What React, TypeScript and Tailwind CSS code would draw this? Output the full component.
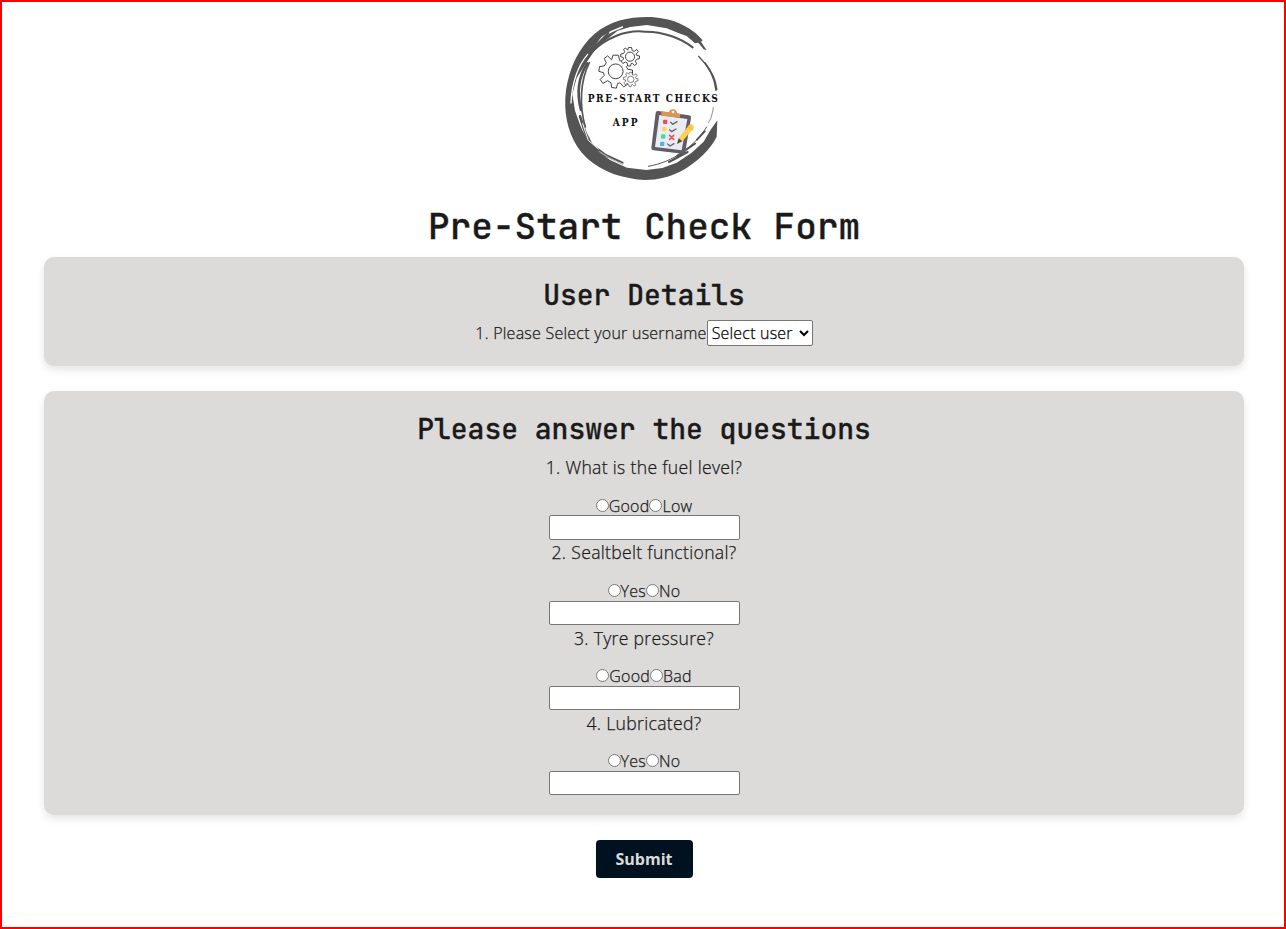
import React from "react";

const GEAR = "M-4 -24 L4 -24 L6 -16 L11 -14 L18 -19 L22 -13 L16 -7 L18 -3 L25 -2 L25 5 L17 7 L14 12 L18 19 L12 23 L6 17 L3 18 L1 25 L-6 24 L-7 17 L-12 14 L-19 18 L-23 12 L-17 6 L-18 2 L-25 0 L-24 -7 L-17 -8 L-14 -13 L-17 -19 L-12 -23 L-6 -17 Z";

function Gear({ x, y, s, w, r = 10 }: { x: number; y: number; s: number; w: number; r?: number }) {
  return (
    <g transform={`translate(${x} ${y}) scale(${s})`} fill="none" stroke="#444" strokeWidth={w / s} strokeLinejoin="round">
      <path d={GEAR} fill="#fff" />
      <circle r={r} />
    </g>
  );
}

function Logo() {
  return (
    <svg className="mr-1 block h-[180px] w-[175px]" viewBox="0 0 525 540" role="img" aria-label="Pre-start checks app">
      <path
        fill="#545454"
        d="M455 127 L446 124 L430 104 L420 106 L395 84 L370 75 L335 61 L276 51 L225 57 L188 68 L160 91 L128 114 L94 164 L65 210 L52 258 L60 308 L75 350 L83 368 L100 398 L125 426 L165 456 L216 479 L274 486 L322 480 L365 464 L410 434 L446 401 L465 368 L487 337 L485 386 C469 420 427 464 375 491 C330 513 277 522 227 511 C158 499 100 466 67 416 C37 369 25 310 33 247 C42 181 72 117 119 77 C166 39 218 27 278 27 C344 27 409 54 443 97 L438 101 Z"
      />
      <g fill="none" stroke="#545454" strokeLinecap="round">
        <path d="M103 128 C128 93 164 70 202 57" stroke="#fff" strokeWidth="5" />
        <path d="M48 285 C50 227 69 172 98 139" stroke="#fff" strokeWidth="4" />
        <path d="M111 132 C150 91 211 65 269 71 C324 70 378 91 413 118" strokeWidth="6" />
        <path d="M102 130 L134 88 M107 130 L160 75 M104 124 L119 120" strokeWidth="7" />
        <path d="M91 357 C72 291 76 218 103 164" strokeWidth="5" />
        <path d="M78 306 C63 249 75 200 97 166" strokeWidth="8" />
        <path d="M75 325 L91 374 L109 410 L152 442 L202 465" strokeWidth="8" />
        <path d="M83 347 L100 397 L130 423" stroke="#fff" strokeWidth="3" />
        <path d="M134 431 C167 455 194 464 221 474" stroke="#fff" strokeWidth="2" />
        <path d="M431 145 C463 177 479 208 483 247" strokeWidth="4" />
        <path d="M450 165 C469 189 482 215 485 244" strokeWidth="5" />
        <path d="M475 299 C471 323 467 335 460 344" strokeWidth="2" />
        <path d="M455 357 C418 415 356 462 280 475" strokeWidth="3" />
        <path d="M449 370 L426 395 M420 407 L366 444 M398 432 L342 462" strokeWidth="6" />
      </g>
      <Gear x={182} y={190} s={2.02} w={3} r={11} />
      <Gear x={225} y={146} s={1.14} w={3} r={12} />
      <Gear x={227} y={214} s={0.88} w={2} r={11} />
      <g fill="#111" fontFamily="'DejaVu Serif', serif" fontWeight="700">
        <text transform="translate(98 282) scale(0.88 1)" fontSize="31" textLength="444" lengthAdjust="spacing">PRE-START CHECKS</text>
        <text transform="translate(173 353) scale(0.88 1)" fontSize="31" textLength="85" lengthAdjust="spacing">APP</text>
      </g>
      <path d="M309 309 L402 322 Q409 323 408 330 L391 431 Q390 438 383 437 L295 427 Q288 426 289 419 L302 315 Q303 308 309 309" fill="#625b68" />
      <path d="M313 321 L397 333 L380 427 L300 417 Z" fill="#e9edf2" />
      <path d="M319 310 L342 313 Q344 303 354 304 Q366 305 366 316 L376 318 L375 329 L319 323 Z" fill="#da9653" />
      <circle cx="354" cy="312" r="4" fill="#fff" />
      <rect x="324" y="335" width="13" height="13" rx="3" fill="#ee475e" />
      <rect x="321" y="357" width="13" height="13" rx="3" fill="#ffd35e" />
      <rect x="318" y="379" width="13" height="13" rx="3" fill="#3fe09b" />
      <rect x="315" y="401" width="13" height="13" rx="3" fill="#62a7f4" />
      <g fill="none" stroke="#65616e" strokeWidth="4" strokeLinecap="round" strokeLinejoin="round">
        <path d="M347 343 L353 349 L366 341 M344 365 L350 371 L363 363 M338 408 L345 414 L357 407" />
        <path d="M344 382 L356 394 M356 382 L344 394" stroke="#ed4d62" strokeWidth="5" />
      </g>
      <path d="M403 350 Q406 345 411 349 L416 354 Q419 358 414 363 L382 400 L367 407 L371 390 Z" fill="#ffd14f" />
      <path d="M402 351 L416 363 L410 369 L397 358 Z" fill="#ffbf46" />
      <path d="M371 391 L382 400 L366 408 Z" fill="#51484f" />
    </svg>
  );
}

const questions = [
  { text: "1. What is the fuel level?", options: ["Good", "Low"] },
  { text: "2. Sealtbelt functional?", options: ["Yes", "No"] },
  { text: "3. Tyre pressure?", options: ["Good", "Bad"] },
  { text: "4. Lubricated?", options: ["Yes", "No"] },
];

const heading = "font-['JetBrains_Mono','DejaVu_Sans_Mono',monospace] font-medium text-[#1a1a1a] whitespace-nowrap [-webkit-text-stroke:0.3px_currentColor]";
const card = "w-[1200px] rounded-[10px] bg-[#dcdbd9] flex flex-col items-center pt-5 shadow-[0_4px_8px_rgba(0,0,0,0.1)]";
const bodyText = "tracking-[0.24px] [-webkit-text-stroke:0.25px_currentColor]";

export default function App() {
  return (
    <main className="flex h-[929px] w-[1286px] flex-col items-center border-2 border-[#ff0000] bg-white pl-[2px] pt-[6px] font-['Open_Sans',sans-serif] text-base font-light text-[#1a1a1a]">
      <Logo />
      <h1 className={`${heading} mt-[14px] h-[49px] text-[36px] leading-[48px]`}>Pre-Start Check Form</h1>
      <section className={`${card} mt-[6px] h-[109px]`}>
        <h2 className={`${heading} h-[37px] text-[28px] leading-[36px]`}>User Details</h2>
        <label className={`${bodyText} mt-[6px] flex h-[26px] items-center`}>
          <span>1. Please Select your username</span>
          <select className="h-[26px] w-[106px] rounded-[2px] border border-[#767676] bg-white text-base font-light tracking-[0.2px] text-black">
            <option>Select user</option>
          </select>
        </label>
      </section>
      <section className={`${card} mt-[25px] h-[424px]`}>
        <h2 className={`${heading} h-[37px] text-[28px] leading-[36px]`}>Please answer the questions</h2>
        <div className="mt-[7.2px] flex w-[240px] flex-col">
          {questions.map((q, i) => (
            <fieldset key={q.text} className="flex h-[85.17px] flex-col items-center">
              <p className="h-[25px] text-[17.6px] leading-[25.5px] tracking-[0.31px] [-webkit-text-stroke:0.25px_currentColor]">{q.text}</p>
              <div className={`${bodyText} mt-[14.5px] flex h-[20.5px] items-center leading-[22px]`}>
                {q.options.map((o) => (
                  <label key={o} className="flex items-center">
                    <input type="radio" name={`question-${i}`} className="m-0 mt-px h-[13px] w-[13px]" />
                    <span className="translate-y-px">{o}</span>
                  </label>
                ))}
              </div>
              <input type="text" aria-label={q.text} className="mt-[0.2px] h-[24.5px] w-[191px] shrink-0 rounded-[2px] border border-[#767676] bg-white px-1" />
            </fieldset>
          ))}
        </div>
      </section>
      <button className="mt-[25px] h-[38px] w-[97px] rounded-[4px] bg-[#001120] text-base font-bold text-[#dcdbd9]">Submit</button>
    </main>
  );
}
